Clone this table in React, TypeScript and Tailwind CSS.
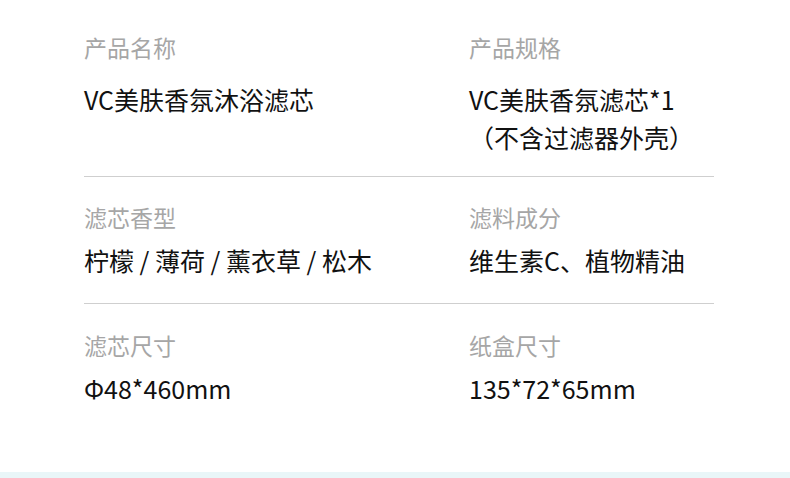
const rows = [
  {
    items: [
      { label: "产品名称", value: ["VC美肤香氛沐浴滤芯"] },
      { label: "产品规格", value: ["VC美肤香氛滤芯*1", "（不含过滤器外壳）"] },
    ],
    pad: "pt-[31px] pb-[20px]",
    gap: "mt-[17px]",
  },
  {
    items: [
      { label: "滤芯香型", value: ["柠檬 / 薄荷 / 薰衣草 / 松木"] },
      { label: "滤料成分", value: ["维生素C、植物精油"] },
    ],
    pad: "pt-[24px] pb-[24px]",
    gap: "mt-[8px]",
  },
  {
    items: [
      { label: "滤芯尺寸", value: ["Φ48*460mm"] },
      { label: "纸盒尺寸", value: ["135*72*65mm"] },
    ],
    pad: "pt-[25px] pb-[0px]",
    gap: "mt-[8px]",
  },
];

export default function App() {
  return (
    <div className="w-[790px] h-[478px] bg-white flex flex-col overflow-hidden font-['Noto_Sans_CJK_SC','Noto_Sans',sans-serif]">
      <div className="flex-1 px-[84px]">
        <div className="w-[630px]">
          {rows.map((row, i) => (
            <div
              key={i}
              className={`grid grid-cols-[385px_245px] ${row.pad} ${i < rows.length - 1 ? "border-b border-[#cfcfcf]" : ""}`}
            >
              {row.items.map((it) => (
                <div key={it.label} className="flex flex-col">
                  <div className="text-[23px] leading-[32px] text-[#a6a6a6]">{it.label}</div>
                  <div className={`${row.gap} text-[25px] leading-[38px] text-[#111111] whitespace-nowrap`}>
                    {it.value.map((v) => (
                      <div key={v}>{v}</div>
                    ))}
                  </div>
                </div>
              ))}
            </div>
          ))}
        </div>
      </div>
      <div className="h-[6px] bg-[#e9f6f8]" />
    </div>
  );
}
